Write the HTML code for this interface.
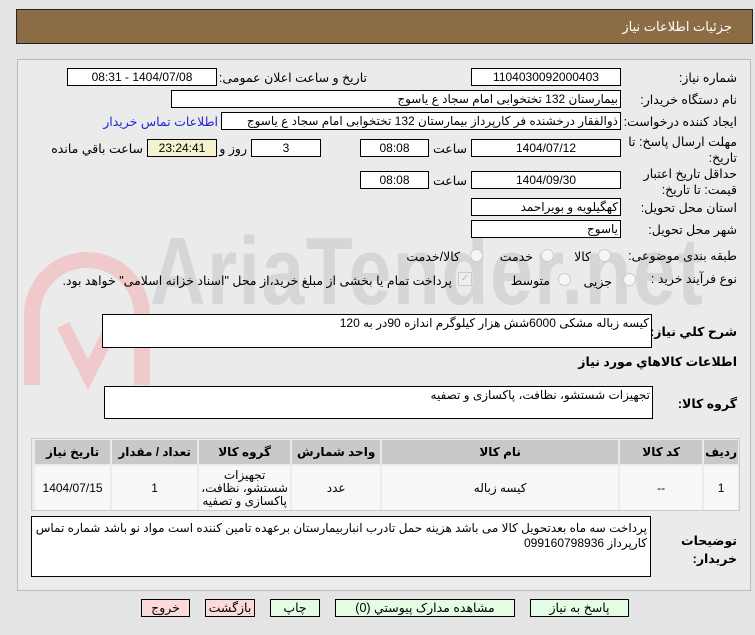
<!DOCTYPE html>
<html><head><meta charset="utf-8"><style>
body{margin:0;width:755px;height:635px;background:#e4e4e4;font-family:"Liberation Sans","DejaVu Sans",sans-serif;font-size:12px;color:#000;position:relative;overflow:hidden;direction:rtl}
.a{position:absolute}
.hdr{left:16px;top:9px;width:735px;height:33px;background:#8b6c44;border:1px solid #222;color:#fff;font-size:13px}
.panel{left:17px;top:59px;width:732px;height:530px;border:1px solid #bbb;background:#ebebeb}
.box{position:absolute;background:#fff;border:1px solid #000;box-sizing:border-box;height:18px;line-height:16px;text-align:center;font-size:12px;white-space:nowrap;overflow:hidden}
.r{text-align:right;padding-right:2px}
.lbl{position:absolute;white-space:nowrap;font-size:12.5px}
.rad{position:absolute;width:11px;height:11px;border:1px solid #ccc;border-radius:50%;background:#f6f6f6}
table{border-collapse:separate;border-spacing:2px;font-size:12px}
td,th{text-align:center}
th{background:#c9c9c9;height:22px;font-weight:bold}
td{background:#f7f7f7;height:42px}
.btn{position:absolute;top:599px;height:18px;box-sizing:border-box;border:1px solid #000;text-align:center;line-height:16px;font-size:12.5px;background:#e4fbe4}
.red{background:#fcdada}
.wm{left:150px;top:222px;direction:ltr;font-size:96px;font-weight:bold;color:#d6d6d6;letter-spacing:2px;line-height:100px;transform:scaleX(0.8);transform-origin:left top}
</style></head><body>
<div class="a hdr"><span class="a" style="right:20px;top:9px">جزئیات اطلاعات نیاز</span></div>
<div class="a panel"></div>
<div class="a wm">AriaTender.net</div>
<svg class="a" style="left:18px;top:245px" width="135" height="145"><path d="M14 140 L14 70 A55 55 0 0 1 124 70 L124 140" stroke="#f0caca" stroke-width="16" fill="none"/><path d="M45 80 L70 130 L95 80" stroke="#f0caca" stroke-width="14" fill="none"/></svg>

<span class="lbl" style="right:18px;top:70px">شماره نیاز:</span>
<div class="box" style="left:471px;top:68px;width:150px">1104030092000403</div>
<span class="lbl" style="right:388px;top:70px">تاریخ و ساعت اعلان عمومی:</span>
<div class="box" style="left:67px;top:68px;width:150px">1404/07/08 - 08:31</div>

<span class="lbl" style="right:18px;top:92px">نام دستگاه خریدار:</span>
<div class="box r" style="left:171px;top:90px;width:450px">بیمارستان 132 تختخوابی امام سجاد  ع  یاسوج</div>

<span class="lbl" style="right:18px;top:114px">ایجاد کننده درخواست:</span>
<div class="box r" style="left:221px;top:112px;width:400px">ذوالفقار درخشنده فر کارپرداز بیمارستان 132 تختخوابی امام سجاد  ع  یاسوج</div>
<span class="lbl" style="right:537px;top:114px;color:#2222dd">اطلاعات تماس خریدار</span>

<span class="lbl" style="right:18px;top:134px;line-height:16px;text-align:right">مهلت ارسال پاسخ: تا<br>تاریخ:</span>
<div class="box" style="left:471px;top:139px;width:150px">1404/07/12</div>
<span class="lbl" style="right:288px;top:141px">ساعت</span>
<div class="box" style="left:360px;top:139px;width:69px">08:08</div>
<div class="box" style="left:251px;top:139px;width:70px">3</div>
<span class="lbl" style="right:508px;top:141px">روز و</span>
<div class="box" style="left:147px;top:139px;width:70px;background:#f5f3cf">23:24:41</div>
<span class="lbl" style="right:612px;top:141px">ساعت باقي مانده</span>

<span class="lbl" style="right:18px;top:166px;line-height:16px">حداقل تاریخ اعتبار<br>قیمت: تا تاریخ:</span>
<div class="box" style="left:471px;top:171px;width:150px">1404/09/30</div>
<span class="lbl" style="right:288px;top:173px">ساعت</span>
<div class="box" style="left:360px;top:171px;width:69px">08:08</div>

<span class="lbl" style="right:18px;top:200px">استان محل تحویل:</span>
<div class="box r" style="left:471px;top:198px;width:150px">کهگیلویه و بویراحمد</div>
<span class="lbl" style="right:18px;top:222px">شهر محل تحویل:</span>
<div class="box r" style="left:471px;top:220px;width:150px">یاسوج</div>

<span class="lbl" style="right:18px;top:248px">طبقه بندی موضوعی:</span>
<div class="rad" style="left:598px;top:249px"></div><span class="lbl" style="right:164px;top:249px">کالا</span>
<div class="rad" style="left:541px;top:249px"></div><span class="lbl" style="right:222px;top:249px">خدمت</span>
<div class="rad" style="left:470px;top:249px"></div><span class="lbl" style="right:295px;top:249px">کالا/خدمت</span>

<span class="lbl" style="right:18px;top:271px">نوع فرآیند خرید :</span>
<div class="rad" style="left:623px;top:273px"></div><span class="lbl" style="right:143px;top:274px">جزیی</span>
<div class="rad" style="left:558px;top:273px"></div><span class="lbl" style="right:205px;top:273px">متوسط</span>
<div class="a" style="left:458px;top:272px;width:12px;height:12px;border:1px solid #ccc;background:#eee;color:#bbb;font-size:10px;line-height:12px;text-align:center">✓</div>
<span class="lbl" style="right:303px;top:273px">پرداخت تمام یا بخشی از مبلغ خرید،از محل "اسناد خزانه اسلامی" خواهد بود.</span>

<span class="lbl" style="right:18px;top:324px;font-weight:bold">شرح كلي نياز:</span>
<div class="box r" style="left:102px;top:314px;width:550px;height:34px;text-align:right">کیسه زباله مشکی 6000شش هزار کیلوگرم  اندازه  90در به 120</div>
<span class="lbl" style="right:18px;top:354px;font-weight:bold">اطلاعات کالاهاي مورد نياز</span>
<span class="lbl" style="right:18px;top:396px;font-weight:bold">گروه کالا:</span>
<div class="box r" style="left:104px;top:386px;width:549px;height:33px;text-align:right">تجهیزات شستشو، نظافت، پاکسازی و تصفیه</div>

<div class="a" style="left:31px;top:438px;width:707px;height:71px;border:1px solid #ccc;background:#ebebeb">
<table style="width:707px;margin-top:-1px;margin-right:-1px">
<tr><th style="width:27px">ردیف</th><th style="width:80px">کد کالا</th><th style="width:234px">نام کالا</th><th style="width:86px">واحد شمارش</th><th style="width:89px">گروه کالا</th><th style="width:83px">تعداد / مقدار</th><th>تاریخ نیاز</th></tr>
<tr><td>1</td><td>--</td><td>کیسه زباله</td><td>عدد</td><td style="line-height:13px">تجهیزات شستشو، نظافت، پاکسازی و تصفیه</td><td>1</td><td>1404/07/15</td></tr>
</table></div>

<span class="lbl" style="right:18px;top:532px;font-weight:bold;line-height:18px;text-align:right">توضیحات<br>خریدار:</span>
<div class="box r" style="left:31px;top:516px;width:620px;height:61px;text-align:right;white-space:normal;line-height:15px;padding:4px 3px 0 3px">پرداخت سه ماه بعدتحویل کالا می باشد هزینه حمل تادرب انباربیمارستان برعهده تامین کننده است مواد نو باشد شماره تماس کارپرداز 099160798936</div>

<div class="btn" style="left:530px;width:99px">پاسخ به نیاز</div>
<div class="btn" style="left:335px;width:180px">مشاهده مدارک پیوستي (0)</div>
<div class="btn" style="left:270px;width:50px">چاپ</div>
<div class="btn red" style="left:205px;width:50px">بازگشت</div>
<div class="btn red" style="left:141px;width:49px">خروج</div>
</body></html>
